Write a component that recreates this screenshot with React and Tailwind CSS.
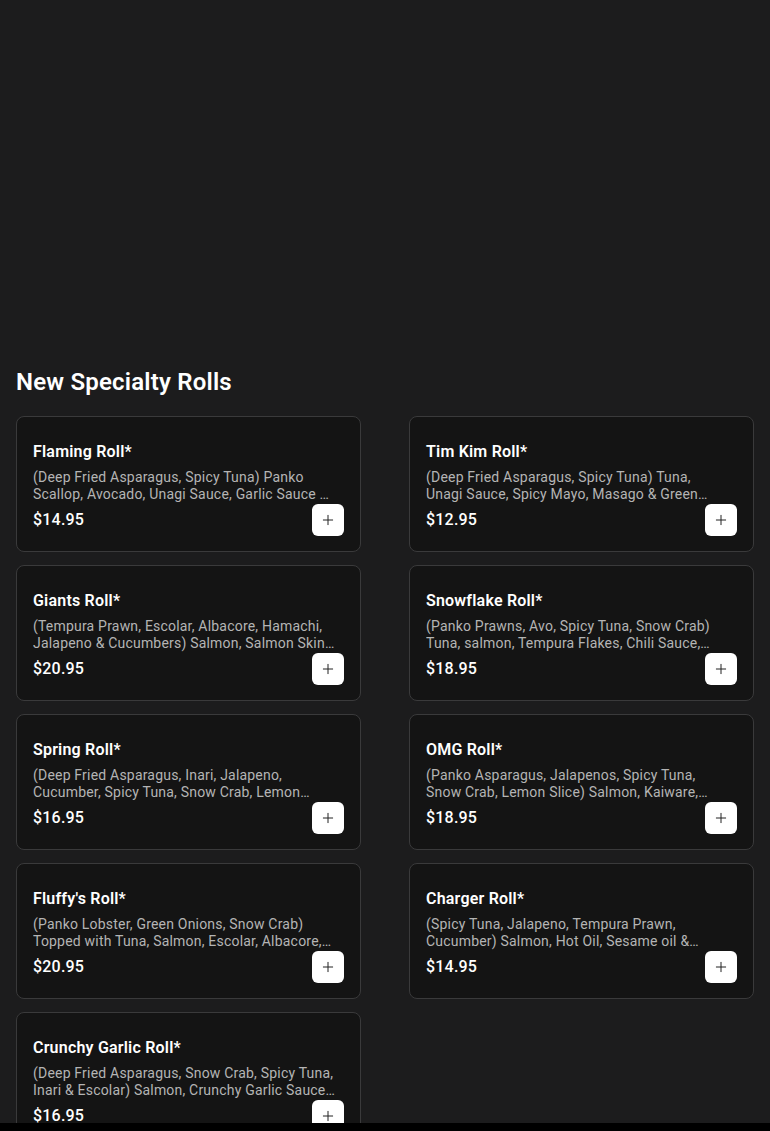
import { Plus } from "lucide-react";

const rolls = [
  {
    name: "Flaming Roll*",
    desc: "(Deep Fried Asparagus, Spicy Tuna) Panko Scallop, Avocado, Unagi Sauce, Garlic Sauce & Green Onions",
    price: "$14.95",
  },
  {
    name: "Tim Kim Roll*",
    desc: "(Deep Fried Asparagus, Spicy Tuna) Tuna, Unagi Sauce, Spicy Mayo, Masago & Green Onions",
    price: "$12.95",
  },
  {
    name: "Giants Roll*",
    desc: "(Tempura Prawn, Escolar, Albacore, Hamachi, Jalapeno & Cucumbers) Salmon, Salmon Skin, Unagi Sauce & Spicy Mayo",
    price: "$20.95",
  },
  {
    name: "Snowflake Roll*",
    desc: "(Panko Prawns, Avo, Spicy Tuna, Snow Crab) Tuna, salmon, Tempura Flakes, Chili Sauce, Spicy Mayo & Green Onions",
    price: "$18.95",
  },
  {
    name: "Spring Roll*",
    desc: "(Deep Fried Asparagus, Inari, Jalapeno, Cucumber, Spicy Tuna, Snow Crab, Lemon Slice) Salmon & Ponzu Sauce",
    price: "$16.95",
  },
  {
    name: "OMG Roll*",
    desc: "(Panko Asparagus, Jalapenos, Spicy Tuna, Snow Crab, Lemon Slice) Salmon, Kaiware, Tobiko & Spicy Mayo",
    price: "$18.95",
  },
  {
    name: "Fluffy's Roll*",
    desc: "(Panko Lobster, Green Onions, Snow Crab) Topped with Tuna, Salmon, Escolar, Albacore, Unagi Sauce & Spicy Mayo",
    price: "$20.95",
  },
  {
    name: "Charger Roll*",
    desc: "(Spicy Tuna, Jalapeno, Tempura Prawn, Cucumber) Salmon, Hot Oil, Sesame oil & Green Onions",
    price: "$14.95",
  },
  {
    name: "Crunchy Garlic Roll*",
    desc: "(Deep Fried Asparagus, Snow Crab, Spicy Tuna, Inari & Escolar) Salmon, Crunchy Garlic Sauce & Green Onions",
    price: "$16.95",
  },
];

function RollCard({ roll }) {
  return (
    <div className="rounded-lg border border-[#3a3a3b] bg-[#141414] px-4 pt-[23px] pb-[15px]">
      <h3 className="text-base leading-6 font-semibold tracking-[0.2px] text-white">{roll.name}</h3>
      <p className="mt-[5px] pr-2 text-sm leading-[17px] tracking-[0.2px] text-[#b4b4b4] line-clamp-2">{roll.desc}</p>
      <div className="mt-px flex items-center justify-between">
        <span className="text-base font-medium tracking-[0.2px] text-white">{roll.price}</span>
        <button className="flex h-8 w-8 items-center justify-center rounded-md bg-white text-[#222]">
          <Plus size={16} strokeWidth={1.5} />
        </button>
      </div>
    </div>
  );
}

export default function App() {
  return (
    <div
      className="min-h-screen bg-[#1c1c1d] text-white"
      style={{ fontFamily: "Roboto, 'Noto Sans', sans-serif" }}
    >
      {/* HERO SPACE */}

      <div className="h-[366px]"></div>

      {/* MENU SECTION */}

      <div className="px-4 pb-8">
        <h2 className="text-2xl leading-8 font-semibold tracking-[0.2px]">New Specialty Rolls</h2>

        <div className="mt-[18px] grid grid-cols-2 gap-x-12 gap-y-[13px]">
          {rolls.map((roll) => (
            <RollCard key={roll.name} roll={roll} />
          ))}
        </div>
      </div>

      {/* BOTTOM BAR */}

      <div className="fixed bottom-0 left-0 right-0 h-2 bg-black"></div>
    </div>
  );
}
